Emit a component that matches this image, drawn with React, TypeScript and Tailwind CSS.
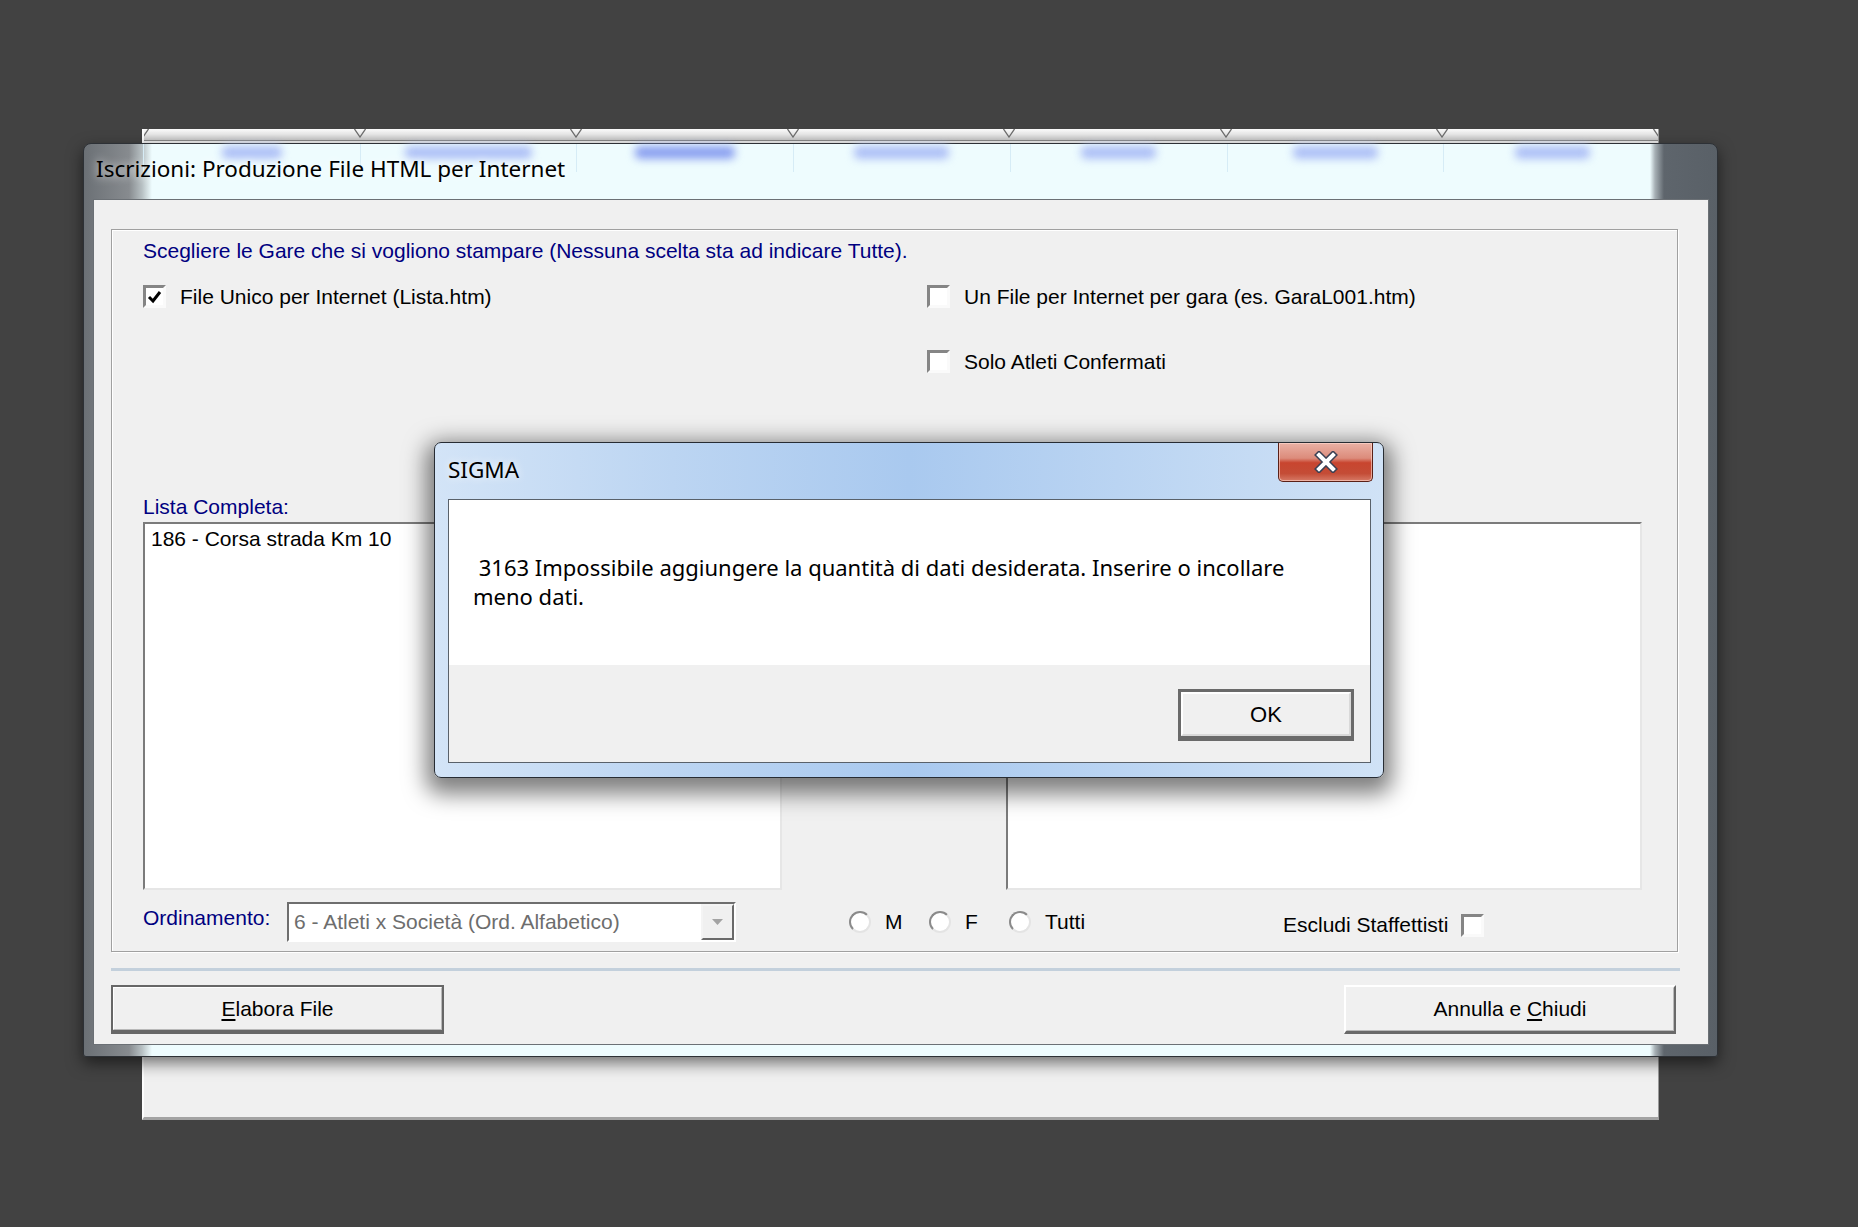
import React from "react";

const APP = "font-['Liberation_Sans',Arial,sans-serif] text-[21px] leading-[24px]";
const SEG = "font-['Noto_Sans','Open_Sans',sans-serif]";

function Check({ checked = false }: { checked?: boolean }) {
  return (
    <div className="w-[23px] h-[23px] shrink-0 border-[3px] border-t-[#858585] border-l-[#858585] border-r-[#fafafa] border-b-[#fafafa] bg-white flex items-center justify-center">
      {checked && (
        <svg width="15" height="14" viewBox="0 0 15 14">
          <path d="M2 7 L6 11 L13 2" fill="none" stroke="#000" strokeWidth="3" />
        </svg>
      )}
    </div>
  );
}

function Radio() {
  return (
    <div className="w-[22px] h-[22px] shrink-0 rounded-full border-2 border-t-[#8a8a8a] border-l-[#8a8a8a] border-r-[#e4e4e4] border-b-[#e4e4e4] bg-white" />
  );
}

function Marker() {
  return (
    <svg width="12" height="9" viewBox="0 0 12 9" className="shrink-0">
      <polyline points="0.5,0 6,8 11.5,0" fill="none" stroke="#6d6d6d" strokeWidth="1.3" />
    </svg>
  );
}

const blobs = [60, 127, 100, 95, 75, 85, 75];

export default function App() {
  return (
    <div className="relative w-[1858px] h-[1227px] bg-[#424242] overflow-hidden">
      {/* window behind */}
      <div className="absolute left-[142px] top-[129px] w-[1517px] h-[991px] bg-[#f0f0f0] border-l-2 border-l-[#fdfdfd] border-b-[3px] border-b-[#a3a3a3] border-r border-r-[#9a9a9a] flex flex-col">
        <div className="h-[12px] overflow-hidden bg-[linear-gradient(to_bottom,#fbfbfb,#e6e6e6_50%,#c9c9c9)] border-b border-[#8c8c8c]">
          <div className="-mx-[7px] flex justify-between">
            {Array.from({ length: 8 }).map((_, i) => (
              <Marker key={i} />
            ))}
          </div>
        </div>
      </div>

      {/* main window */}
      <div className="absolute left-[83px] top-[143px] w-[1635px] h-[914px] rounded-t-[8px] rounded-b-[3px] border border-[#2d3136] shadow-[0_6px_16px_rgba(0,0,0,0.55)] bg-[linear-gradient(to_right,#6b7075_0px,#878b8f_45px,#b7c0c3_58px,#eefcfe_68px,#eefcfe_1566px,#a7b0b5_1571px,#5e656c_1580px,#596067_1635px)] flex flex-col">
        <div className="relative h-[55px] shrink-0">
          {/* blurred tab labels of the window behind, seen through the glass */}
          <div className="absolute left-[59px] top-0 w-[1517px] h-[28px] grid grid-cols-7">
            {blobs.map((w, i) => (
              <div key={i} className="flex justify-center border-l border-[#d6ecf6] pt-[2px]">
                <div
                  style={{ width: w }}
                  className={
                    "h-[13px] rounded-[5px] blur-[4px] " + (i === 2 ? "bg-[#8a9ff0]" : "bg-[#adbff6]")
                  }
                />
              </div>
            ))}
          </div>
          <div className={`relative pt-[15px] pl-[12px] text-[22.5px] leading-[20px] text-black ${SEG} [text-shadow:0_0_10px_#ffffff]`}>
            Iscrizioni: Produzione File HTML per Internet
          </div>
        </div>

        {/* client */}
        <div className={`ml-[9px] mr-[8px] mb-[11px] flex-1 border border-[#6b7075] bg-[#f0f0f0] flex flex-col ${APP}`}>
          {/* group box */}
          <div className="ml-[17px] mt-[29px] w-[1567px] h-[723px] border border-[#a0a0a0] shadow-[inset_1px_1px_0_#ffffff,1px_1px_0_#ffffff] pl-[31px] flex flex-col">
            <div className="mt-[9px] text-[#000080]">
              Scegliere le Gare che si vogliono stampare (Nessuna scelta sta ad indicare Tutte).
            </div>

            <div className="mt-[22px] flex">
              <div className="w-[784px] flex items-start gap-[14px]">
                <Check checked />
                <span className="text-black">File Unico per Internet (Lista.htm)</span>
              </div>
              <div className="flex flex-col gap-[41px]">
                <div className="flex items-start gap-[14px]">
                  <Check />
                  <span className="text-black">Un File per Internet per gara (es. GaraL001.htm)</span>
                </div>
                <div className="flex items-start gap-[14px]">
                  <Check />
                  <span className="text-black">Solo Atleti Confermati</span>
                </div>
              </div>
            </div>

            <div className="mt-[121px] flex">
              <div className="w-[639px] flex flex-col">
                <div className="text-[#000080]">Lista Completa:</div>
                <div className="mt-[3px] h-[368px] border-2 border-t-[#7b7b7b] border-l-[#7b7b7b] border-r-[#e6e6e6] border-b-[#e6e6e6] bg-white px-[6px] pt-[3px] text-black">
                  186 - Corsa strada Km 10
                </div>
              </div>
              <div className="ml-[224px] w-[636px] flex flex-col">
                <div className="text-[#000080]">Lista Selezionata:</div>
                <div className="mt-[3px] h-[368px] border-2 border-t-[#7b7b7b] border-l-[#7b7b7b] border-r-[#e6e6e6] border-b-[#e6e6e6] bg-white" />
              </div>
            </div>

            <div className="mt-[12px] h-[40px] flex items-center">
              <div className="w-[144px] pb-[8px] text-[#000080]">Ordinamento:</div>
              <div className="w-[449px] h-[40px] border-2 border-t-[#6e6e6e] border-l-[#6e6e6e] border-r-white border-b-white bg-white flex items-center">
                <span className="pl-[5px] flex-1 text-[#6d6d6d]">6 - Atleti x Società (Ord. Alfabetico)</span>
                <div className="w-[33px] h-full border-2 border-t-[#f4f4f4] border-l-[#f4f4f4] border-r-[#6a6a6a] border-b-[#6a6a6a] bg-[#f0f0f0] flex items-center justify-center">
                  <svg width="11" height="6" viewBox="0 0 11 6">
                    <polygon points="0,0 11,0 5.5,6" fill="#a3a3a3" />
                  </svg>
                </div>
              </div>
              <div className="ml-[113px] w-[80px] flex items-center gap-[14px]">
                <Radio />
                <span>M</span>
              </div>
              <div className="w-[80px] flex items-center gap-[14px]">
                <Radio />
                <span>F</span>
              </div>
              <div className="w-[274px] flex items-center gap-[14px]">
                <Radio />
                <span>Tutti</span>
              </div>
              <div className="flex items-center gap-[13px] mt-[6px]">
                <span>Escludi Staffettisti</span>
                <Check />
              </div>
            </div>
          </div>

          <div className="ml-[17px] mt-[16px] w-[1569px] h-[3px] bg-[#c3d0dc]" />

          <div className="ml-[17px] mt-[14px] w-[1565px] flex justify-between">
            <div className="w-[333px] h-[49px] border-2 border-b-[4px] border-[#676767] bg-[#f0f0f0]">
              <div className="h-full border border-t-white border-l-white border-r-[#b9b9b9] border-b-[#b9b9b9] flex items-center justify-center text-black">
                <span>
                  <span className="underline underline-offset-[3px]">E</span>labora File
                </span>
              </div>
            </div>
            <div className="w-[332px] h-[49px] border-2 border-b-[3px] border-t-white border-l-white border-r-[#696969] border-b-[#696969] bg-[#f0f0f0]">
              <div className="h-full border border-t-[#f0f0f0] border-l-[#f0f0f0] border-r-[#b9b9b9] border-b-[#b9b9b9] flex items-center justify-center text-black">
                <span>
                  Annulla e <span className="underline underline-offset-[3px]">C</span>hiudi
                </span>
              </div>
            </div>
          </div>
        </div>
      </div>

      {/* dialog SIGMA */}
      <div className="absolute left-[434px] top-[442px] w-[950px] h-[336px] rounded-[7px] border border-[#272c33] shadow-[0_8px_22px_8px_rgba(0,0,0,0.5)] bg-[linear-gradient(to_right,#d3e4f7,#bcd5f2_25%,#a9c9ef_50%,#bad4f2_72%,#d0e2f6)] flex flex-col">
        <div className="h-[56px] shrink-0 flex justify-between items-start">
          <div className={`pl-[13px] pt-[13px] text-[22.5px] leading-[27px] text-black ${SEG} [text-shadow:0_0_8px_#ffffff]`}>
            SIGMA
          </div>
          <div className="mr-[10px] w-[95px] h-[39px] rounded-b-[5px] border border-t-0 border-[#5a2017] bg-[linear-gradient(to_bottom,#eab1a5,#dc8b7b_40%,#c8452f_52%,#c44c36_80%,#d77a66)] shadow-[inset_0_0_0_1px_rgba(255,220,210,0.6)] flex items-center justify-center">
            <svg width="24" height="22" viewBox="0 0 24 22">
              <path d="M5 4 L19 18 M19 4 L5 18" stroke="#3a3f52" strokeWidth="7" strokeLinecap="square" />
              <path d="M5 4 L19 18 M19 4 L5 18" stroke="#ffffff" strokeWidth="4" strokeLinecap="square" />
            </svg>
          </div>
        </div>
        <div className="ml-[13px] mr-[12px] mb-[14px] flex-1 border border-[#59616a] bg-[#f0f0f0] flex flex-col">
          <div className={`h-[165px] shrink-0 bg-white pt-[53px] pl-[24px] text-[22px] leading-[29px] text-black whitespace-nowrap ${SEG}`}>
            {"\u00a03163 Impossibile aggiungere la quantità di dati desiderata. Inserire o incollare"}
            <br />
            meno dati.
          </div>
          <div className="flex-1 flex justify-end items-start pt-[24px] pr-[16px]">
            <div className="w-[176px] h-[52px] border-[3px] border-b-[5px] border-[#6a6a6a] bg-[#f0f0f0]">
              <div className="h-full border-2 border-t-white border-l-white border-r-[#d9d9d9] border-b-[#d9d9d9] flex items-center justify-center font-['Liberation_Sans',Arial,sans-serif] text-[22px] text-black">
                OK
              </div>
            </div>
          </div>
        </div>
      </div>
    </div>
  );
}
